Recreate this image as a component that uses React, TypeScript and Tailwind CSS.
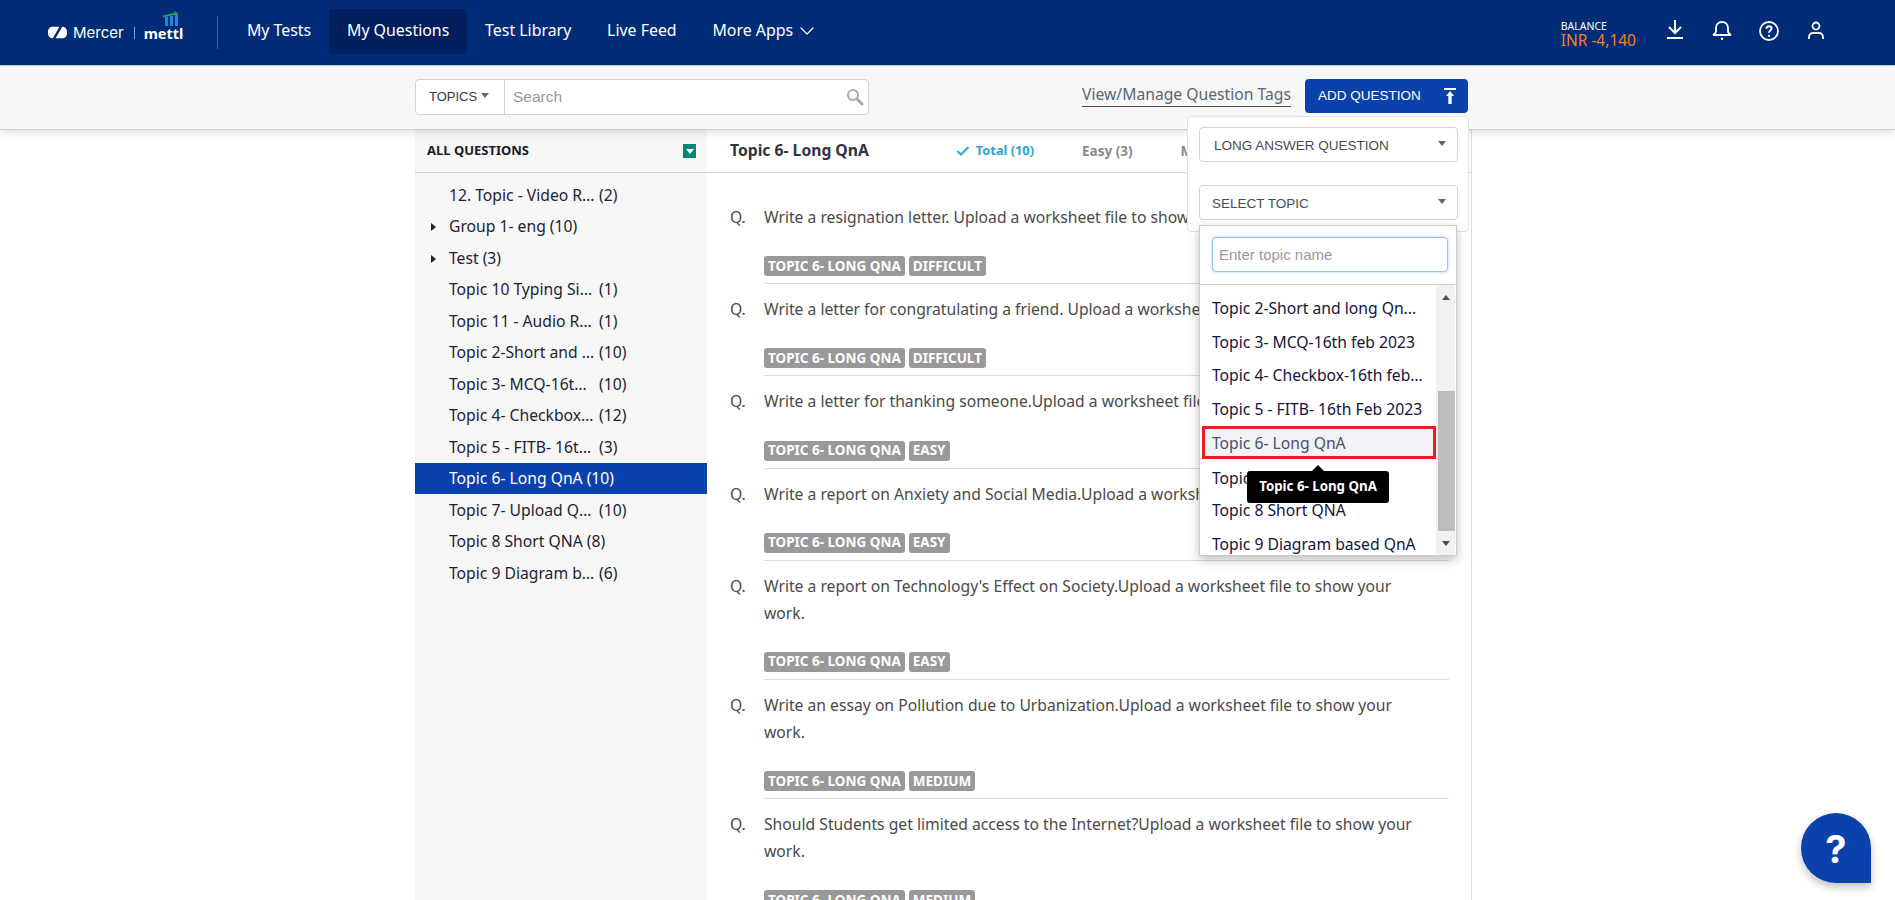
import { ChevronDown } from "lucide-react";

const NAV = ["My Tests", "My Questions", "Test Library", "Live Feed"];

const SIDEBAR: { label: string; count: string; arrow?: boolean; active?: boolean }[] = [
  { label: "12. Topic - Video Response", count: "(2)" },
  { label: "Group 1- eng", count: "(10)", arrow: true },
  { label: "Test", count: "(3)", arrow: true },
  { label: "Topic 10 Typing Simulation", count: "(1)" },
  { label: "Topic 11 - Audio Response", count: "(1)" },
  { label: "Topic 2-Short and long QnA", count: "(10)" },
  { label: "Topic 3- MCQ-16th feb 2023", count: "(10)" },
  { label: "Topic 4- Checkbox-16th feb", count: "(12)" },
  { label: "Topic 5 - FITB- 16th Feb 2023", count: "(3)" },
  { label: "Topic 6- Long QnA", count: "(10)", active: true },
  { label: "Topic 7- Upload QnA 16th", count: "(10)" },
  { label: "Topic 8 Short QNA", count: "(8)" },
  { label: "Topic 9 Diagram based QnA", count: "(6)" },
];

const QUESTIONS = [
  { text: "Write a resignation letter. Upload a worksheet file to show your work.", level: "DIFFICULT" },
  { text: "Write a letter for congratulating a friend. Upload a worksheet file to show your work.", level: "DIFFICULT" },
  { text: "Write a letter for thanking someone.Upload a worksheet file to show your work.", level: "EASY" },
  { text: "Write a report on Anxiety and Social Media.Upload a worksheet file to show your work.", level: "EASY" },
  { text: "Write a report on Technology's Effect on Society.Upload a worksheet file to show your work.", level: "EASY" },
  { text: "Write an essay on Pollution due to Urbanization.Upload a worksheet file to show your work.", level: "MEDIUM" },
  { text: "Should Students get limited access to the Internet?Upload a worksheet file to show your work.", level: "MEDIUM" },
];

const TOPICS = [
  "Topic 2-Short and long Qn...",
  "Topic 3- MCQ-16th feb 2023",
  "Topic 4- Checkbox-16th feb 2023",
  "Topic 5 - FITB- 16th Feb 2023",
  "Topic 6- Long QnA",
  "Topic 7- Upload QnA",
  "Topic 8 Short QNA",
  "Topic 9 Diagram based QnA",
];

function Logo() {
  return (
    <div className="flex w-[217px] shrink-0 items-center pl-[48px]">
      <svg width="19" height="13" viewBox="0 0 20 13" className="shrink-0">
        <path d="M5 .5h7L5 12.500C2.200 12.500 0 10.300 0 7.500v-2C0 2.700 2.200 .5 5 .5z" fill="#fff" />
        <path d="M15 .5c2.800 0 5 2.200 5 5v2c0 2.800-2.200 5-5 5H8L15 .5z" fill="#fff" />
      </svg>
      <span className="ml-[6px] font-['Inter',sans-serif] text-[15px] font-normal leading-none text-white">Mercer</span>
      <span className="ml-[10px] h-[12px] w-px bg-[#8ea3c7]" />
      <div className="relative ml-[9px]">
        <svg width="20" height="15" viewBox="0 0 20 15" className="absolute left-[19px] top-[-10px]">
          <rect x="2" y="6" width="3" height="9" fill="#1e88d8" />
          <rect x="7" y="5" width="3" height="10" fill="#1e88d8" />
          <rect x="12" y="3" width="3" height="12" fill="#1e88d8" />
          <path d="M0 5.500 L13 2.500" stroke="#1fa24a" strokeWidth="2" />
          <path d="M11 0 L15 2 L12 5z" fill="#1fa24a" />
        </svg>
        <span className="relative font-['Noto_Sans',sans-serif] text-[14.500px] font-bold leading-none text-white">mettl</span>
      </div>
    </div>
  );
}

function Header() {
  return (
    <header className="flex h-[66px] items-center border-b border-[#c9ccd2] bg-[#002c77] font-['Noto_Sans',sans-serif]">
      <Logo />
      <div className="h-[33px] w-px bg-[#3d5f9a]" />
      <nav className="mb-[2px] ml-[11px] flex items-center">
        {NAV.map((item) => (
          <a
            key={item}
            className={`flex h-[45px] items-center rounded-[4px] px-[17.900px] pb-[1px] text-[15.900px] text-white ${
              item === "My Questions" ? "bg-[#001f5c]" : ""
            }`}
          >
            {item}
          </a>
        ))}
        <a className="flex h-[45px] items-center gap-[2px] px-[17.900px] pb-[1px] text-[15.900px] text-white">
          More Apps
          <ChevronDown size={24} strokeWidth={1.2} />
        </a>
      </nav>
      <div className="ml-auto flex items-center pr-[67px]">
        <div className="mr-[27px] mt-[2px] flex flex-col">
          <span className="text-[10.5px] leading-[12px] text-white">BALANCE</span>
          <span className="text-[15.5px] leading-[16px] text-[#f58220]">INR -4,140</span>
        </div>
        <div className="mb-[3px] flex items-center gap-[23px] text-white">
          <svg width="24" height="24" viewBox="0 0 24 24" fill="none" stroke="currentColor" strokeWidth="2">
            <path d="M12 1v13M6 8l6 6 6-6" />
            <path d="M4 19h16" />
          </svg>
          <svg width="24" height="24" viewBox="0 0 24 24" fill="none" stroke="currentColor" strokeWidth="1.800">
            <path d="M12 3c-3.500 0-6 2.500-6 6v3c0 2-1 3-3 4h18c-2-1-3-2-3-4V9c0-3.500-2.500-6-6-6z" />
            <circle cx="12" cy="19.800" r="1.200" fill="currentColor" stroke="none" />
          </svg>
          <svg width="24" height="24" viewBox="0 0 24 24" fill="none" stroke="currentColor" strokeWidth="1.800">
            <circle cx="12" cy="12" r="9" />
            <path d="M9.500 9.800c0-1.500 1.100-2.500 2.500-2.500s2.500 1 2.500 2.300c0 2-2.500 2-2.500 4.200" strokeWidth="2" />
            <circle cx="12" cy="16.800" r="1.100" fill="currentColor" stroke="none" />
          </svg>
          <svg width="24" height="24" viewBox="0 0 24 24" fill="none" stroke="currentColor" strokeWidth="1.800">
            <circle cx="12" cy="7" r="3.500" />
            <path d="M5 20v-2c0-2.500 2-4 4-4h6c2 0 4 1.500 4 4v2" />
          </svg>
        </div>
      </div>
    </header>
  );
}

function Caret({ className }: { className: string }) {
  return <span className={`inline-block border-x-[4px] border-t-[5px] border-x-transparent ${className}`} />;
}

function SelectBox({ label, pad }: { label: string; pad: string }) {
  return (
    <div className={`flex h-[35px] w-[259px] items-center justify-between rounded-[4px] border border-[#cfd3dc] bg-white pr-[11px] text-[#4a4a55] ${pad}`}>
      <span className="pt-[3px] text-[13.5px]">{label}</span>
      <Caret className="mb-[3px] border-t-[#666]" />
    </div>
  );
}

function TopicDropdown() {
  return (
    <div className="absolute left-[11px] top-[108px] w-[258px] border border-[#ccc] bg-white font-['Noto_Sans',sans-serif] shadow-[0_4px_10px_rgba(0,0,0,0.25)]">
      <div className="h-[59px] border-b border-[#ccc] pl-[12px] pt-[11px]">
        <div className="flex h-[35px] w-[236px] items-center rounded-[4px] border border-[#8cc4f5] pl-[6px] pt-[2px] font-['Liberation_Sans',sans-serif] text-[15px] text-[#999] shadow-[0_0_3px_rgba(100,170,240,0.6)]">
          Enter topic name
        </div>
      </div>
      <div className="flex h-[270px] pl-[2px] pr-[1px]">
        <ul className="w-[235px] pt-[6px]">
          {TOPICS.map((t) => {
            const hit = t === "Topic 6- Long QnA";
            // this row sits right under the tooltip
            const covered = t === "Topic 7- Upload QnA";
            return (
              <li
                key={t}
                className={`relative flex h-[33.7px] items-center text-[15.700px] ${covered ? "pt-[4px]" : "pt-[2px]"} ${
                  hit
                    ? "border-[3px] border-[#ed1c24] bg-[#f1f2f6] pl-[7px] text-[#4a5070]"
                    : "pl-[10px] text-[#14143c]"
                }`}
              >
                <span className="block w-[212px] truncate">{t}</span>
                {hit && (
                  <div className="absolute left-[42px] top-[42px] z-10 flex h-[32px] w-[142px] items-center justify-center rounded-[3px] bg-black text-[13.300px] font-bold text-white">
                    <span className="absolute left-1/2 top-[-6px] ml-[-6px] border-x-[6px] border-b-[6px] border-x-transparent border-b-black" />
                    {t}
                  </div>
                )}
              </li>
            );
          })}
        </ul>
        <div className="flex w-[19px] flex-col items-center bg-[#f1f1f1]">
          <div className="flex h-[25px] w-full items-center justify-center">
            <span className="border-x-[4px] border-b-[5px] border-x-transparent border-b-[#505050]" />
          </div>
          <div className="mt-[81px] h-[140px] w-[17px] self-end bg-[#bdbdbd]" />
          <div className="flex h-[24px] w-full items-center justify-center">
            <span className="border-x-[4px] border-t-[5px] border-x-transparent border-t-[#505050]" />
          </div>
        </div>
      </div>
    </div>
  );
}

function SubBar() {
  return (
    <div className="relative z-10 flex h-[64px] items-start border-b border-[#cccccc] bg-[#f7f7f7] pl-[415px] pr-[427px] pt-[13px] font-['Liberation_Sans',sans-serif] shadow-[0_3px_8px_rgba(0,0,0,0.12)]">
      <div className="flex h-[36px] w-[454px] items-center rounded-[4px] border border-[#cfd4da] bg-white">
        <div className="flex h-full w-[89px] items-center gap-[4px] border-r border-[#cfd4da] pl-[13px] text-[13px] text-[#3d3350]">
          TOPICS
          <Caret className="mb-[4px] border-t-[#666]" />
        </div>
        <span className="ml-[8px] text-[15.500px] text-[#999]">Search</span>
        <svg width="18" height="18" viewBox="0 0 18 18" className="ml-auto mr-[4px]" fill="none" stroke="#aaa">
          <circle cx="7" cy="7" r="5" strokeWidth="2" />
          <path d="M10.800 10.800L16 16" strokeWidth="3" strokeLinecap="round" />
        </svg>
      </div>
      <a className="ml-auto mr-[14px] mt-[4px] border-b border-[#44505c] pb-[1px] font-['Noto_Sans',sans-serif] text-[15.700px] leading-[22px] text-[#5a6570]">
        View/Manage Question Tags
      </a>
      <div className="relative">
        <button className="flex h-[34px] w-[163px] items-center rounded-[4px] bg-[#0b41ab] pl-[13px] text-[13.500px] text-white">
          ADD QUESTION
          <svg width="14" height="20" viewBox="0 0 14 20" className="ml-auto mr-[11px]" fill="#fff">
            <rect x="1" y="2" width="12" height="2" />
            <path d="M7 5l4 5H8.700v8H5.300v-8H3z" />
          </svg>
        </button>
        <div className="absolute right-[-1px] top-[37px] h-[116px] w-[282px] rounded-[4px] border border-[#e2e2e2] bg-white">
          <div className="absolute left-[11px] top-[10px]">
            <SelectBox label="LONG ANSWER QUESTION" pad="pl-[14px]" />
          </div>
          <div className="absolute left-[11px] top-[68px]">
            <SelectBox label="SELECT TOPIC" pad="pl-[12px]" />
          </div>
          <TopicDropdown />
        </div>
      </div>
    </div>
  );
}

function Sidebar() {
  return (
    <aside className="w-[292px] shrink-0 bg-[#f7f7f7]">
      <div className="flex h-[43px] items-center justify-between border-b border-[#d2d2d2] pl-[12px] pr-[11px]">
        <span className="text-[13px] font-bold text-[#1a1a2a]">ALL QUESTIONS</span>
        <span className="flex h-[14px] w-[13px] items-center justify-center bg-[#00897b]">
          <Caret className="border-t-white" />
        </span>
      </div>
      <ul className="pt-[6px]">
        {SIDEBAR.map((row) => (
          <li
            key={row.label}
            className={`flex h-[31.500px] items-center pt-[2px] text-[15.700px] ${
              row.active ? "bg-[#0b41ab] text-white" : "text-[#1d1d33]"
            }`}
          >
            <span className="flex w-[34px] justify-end pr-[13px]">
              {row.arrow && <span className="border-y-[4px] border-l-[5px] border-y-transparent border-l-[#222]" />}
            </span>
            <span className="max-w-[146px] truncate">{row.label}</span>
            <span className="ml-[4px]">{row.count}</span>
          </li>
        ))}
      </ul>
    </aside>
  );
}

function Tag({ text }: { text: string }) {
  return (
    <span className="flex h-[20px] items-center rounded-[3px] bg-[#999] px-[4px] text-[13.500px] font-bold text-white">
      {text}
    </span>
  );
}

function QuestionList() {
  return (
    <main className="w-[765px] shrink-0 border-r border-[#ddd] bg-white">
      <div className="flex h-[43px] items-center border-b border-[#d2d2d2] pl-[23px]">
        <span className="text-[15.700px] font-bold text-[#33333f]">Topic 6- Long QnA</span>
        <span className="ml-[87px] flex items-center gap-[6px] text-[12.800px] font-bold text-[#2aa5d8]">
          <svg width="14" height="12" viewBox="0 0 14 12" fill="none" stroke="#2aa5d8" strokeWidth="2">
            <path d="M1.500 6l3.500 3.500L12.500 2" />
          </svg>
          Total (10)
        </span>
        <span className="ml-[48px] text-[13.500px] font-bold text-[#8a8a8a]">Easy (3)</span>
        <span className="ml-[48px] text-[13.500px] font-bold text-[#8a8a8a]">Medium (4)</span>
      </div>
      <div className="pt-[19px]">
        {QUESTIONS.map((q) => (
          <div key={q.text} className="flex pl-[23px] pr-[22px] pt-[12px] text-[15.700px] leading-[27px] text-[#4a4a4a]">
            <span className="w-[34px] shrink-0">Q.</span>
            <div className="flex-1 border-b border-[#dcdcdc] pb-[7px]">
              <p className="max-w-[660px]">{q.text}</p>
              <div className="mt-[25.200px] flex gap-[4px]">
                <Tag text="TOPIC 6- LONG QNA" />
                <Tag text={q.level} />
              </div>
            </div>
          </div>
        ))}
      </div>
    </main>
  );
}

export default function App() {
  return (
    <div className="relative h-[900px] overflow-hidden bg-white font-['Noto_Sans',sans-serif]">
      <Header />
      <SubBar />
      <div className="flex h-[770px] overflow-hidden pl-[415px]">
        <Sidebar />
        <QuestionList />
      </div>
      <button className="absolute bottom-[17px] right-[24px] z-20 flex h-[70px] w-[70px] items-center justify-center rounded-full rounded-br-[6px] bg-[#0b41ab] pt-[2px] font-['Inter',sans-serif] text-[38px] font-bold leading-none text-white shadow-[0_4px_8px_rgba(0,0,0,0.25)]">
        ?
      </button>
    </div>
  );
}
